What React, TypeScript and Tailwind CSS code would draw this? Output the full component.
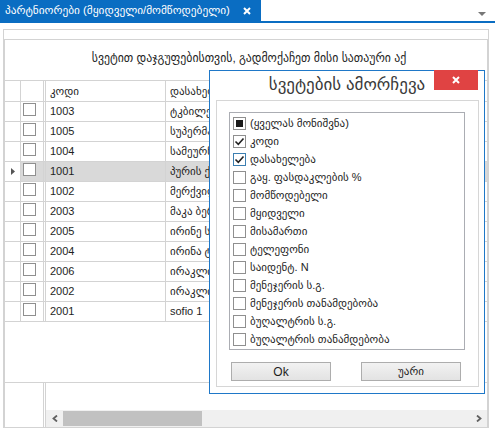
import { useState } from 'react';

const rows = [
  { code: '1003', name: 'ტკბილეული' },
  { code: '1005', name: 'სუპერმარკეტი' },
  { code: '1004', name: 'სამეურნეო' },
  { code: '1001', name: 'პურის ქარხანა' },
  { code: '1002', name: 'მერქვილი' },
  { code: '2003', name: 'მაკა ბერიძე' },
  { code: '2005', name: 'ირინე სალია' },
  { code: '2004', name: 'ირინა ტაბატაძე' },
  { code: '2006', name: 'ირაკლი ბერიძე' },
  { code: '2002', name: 'ირაკლი ლომიძე' },
  { code: '2001', name: 'sofio  1' },
];

const columns = [
  { label: '(ყველას მონიშვნა)', state: 'some' },
  { label: 'კოდი', state: 'on' },
  { label: 'დასახელება', state: 'focus' },
  { label: 'გაყ. ფასდაკლების %', state: 'off' },
  { label: 'მომწოდებელი', state: 'off' },
  { label: 'მყიდველი', state: 'off' },
  { label: 'მისამართი', state: 'off' },
  { label: 'ტელეფონი', state: 'off' },
  { label: 'საიდენტ. N', state: 'off' },
  { label: 'მენეჯერის ს.გ.', state: 'off' },
  { label: 'მენეჯერის თანამდებობა', state: 'off' },
  { label: 'ბუღალტრის ს.გ.', state: 'off' },
  { label: 'ბუღალტრის თანამდებობა', state: 'off' },
];

const Cross = ({ size = 8 }: { size?: number }) => (
  <svg width={size} height={size} viewBox="0 0 8 8">
    <path d="M1 1 L7 7 M7 1 L1 7" stroke="white" strokeWidth="2" />
  </svg>
);

const Check = () => (
  <svg width="11" height="11" viewBox="0 0 11 11" className="absolute left-[0px] top-[0px]">
    <path d="M1.5 5.5 L4.3 8.3 L9.5 2.5" stroke="#222" strokeWidth="1.6" fill="none" />
  </svg>
);

const Box = ({ state }: { state: string }) => (
  <div
    className={
      'relative w-[13px] h-[13px] border bg-white shrink-0 flex items-center justify-center ' +
      (state === 'focus' ? 'border-[#3c7fb1]' : 'border-[#8f8f8f]')
    }
  >
    {state === 'some' && <div className="w-[7px] h-[7px] bg-[#1a1a1a]" />}
    {(state === 'on' || state === 'focus') && <Check />}
  </div>
);

export default function App() {
  const [selected] = useState('1001');

  return (
    <div className="w-[495px] h-[432px] bg-white relative overflow-hidden font-['Liberation_Sans','DejaVu_Sans',sans-serif] text-[#1e1e1e]">
      {/* tab strip */}
      <div className="flex h-[21px]">
        <div className="w-[261px] bg-[#0a6dc2] flex items-center pl-[5px] pr-[10px] text-white text-[11.3px]">
          <span className="flex-1 whitespace-nowrap">პარტნიორები (მყიდველი/მომწოდებელი)</span>
          <Cross size={8} />
        </div>
        <div className="flex-1 flex justify-end items-center pr-[9px] pt-[6px]">
          <svg width="8" height="4" viewBox="0 0 8 4">
            <path d="M0 0 L8 0 L4 4 Z" fill="#777" />
          </svg>
        </div>
      </div>
      <div className="h-[2px] bg-[#0a6dc2]" />

      {/* grid control */}
      <div className="ml-[3px] mt-[6px] w-[486px] h-[399px] border border-[#d3d3d3] pt-[9px] flex flex-col">
        <div className="flex-1 border-t border-x border-[#d3d3d3] flex flex-col">
          <div className="h-[40px] flex items-center justify-center text-[11.8px] pb-[2px] pl-[6px]">
            სვეტით დაჯგუფებისთვის, გადმოქაჩეთ მისი სათაური აქ
          </div>

          {/* header */}
          <div className="flex h-[22px] border-y border-[#d3d3d3] text-[11px]">
            <div className="w-[16px] border-r border-[#d3d3d3]" />
            <div className="w-[23px] border-r border-[#d3d3d3]" />
            <div className="w-[1px]" />
            <div className="w-[121px] border-x border-[#d3d3d3] pl-[4px] flex items-center">კოდი</div>
            <div className="flex-1 pl-[4px] flex items-center whitespace-nowrap">დასახელება</div>
          </div>

          {rows.map((r) => {
            const sel = r.code === selected;
            return (
              <div key={r.code} className="flex h-[20px] border-b border-[#d3d3d3] text-[11px]">
                <div className="w-[16px] border-r border-[#d3d3d3] flex items-center justify-center">
                  {sel && (
                    <svg width="4" height="7" viewBox="0 0 4 7">
                      <path d="M0 0 L4 3.5 L0 7 Z" fill="#555" />
                    </svg>
                  )}
                </div>
                <div className={'w-[23px] border-r border-[#d3d3d3] pl-[2px] pt-[1px] ' + (sel ? 'bg-[#d9d9d9]' : '')}>
                  <Box state="off" />
                </div>
                <div className={'w-[1px] ' + (sel ? 'bg-[#d9d9d9]' : '')} />
                <div className={'w-[121px] border-x border-[#d3d3d3] pl-[4px] flex items-center ' + (sel ? 'bg-[#d9d9d9]' : '')}>
                  {r.code}
                </div>
                <div className={'flex-1 pl-[4px] flex items-center whitespace-nowrap overflow-hidden ' + (sel ? 'bg-[#d9d9d9]' : '')}>
                  {r.name}
                </div>
              </div>
            );
          })}

          <div className="h-[60px]" />

          {/* footer with scrollbar */}
          <div className="flex-1 flex border-t border-[#d3d3d3]">
            <div className="w-[39px] border-r border-[#d3d3d3]" />
            <div className="w-[1px]" />
            <div className="flex-1 border-l border-[#d3d3d3] flex flex-col justify-end">
              <div className="h-[17px] bg-[#f0f0f0] flex items-center">
                <div className="w-[17px] flex items-center justify-center">
                  <svg width="6" height="7" viewBox="0 0 6 7">
                    <path d="M5 0.5 L1.5 3.5 L5 6.5" stroke="#606060" strokeWidth="1.8" fill="none" />
                  </svg>
                </div>
                <div className="w-[139px] h-[15px] bg-[#c1c1c1]" />
                <div className="flex-1" />
                <div className="w-[17px] flex items-center justify-center">
                  <svg width="6" height="7" viewBox="0 0 6 7">
                    <path d="M1 0.5 L4.5 3.5 L1 6.5" stroke="#606060" strokeWidth="1.8" fill="none" />
                  </svg>
                </div>
              </div>
            </div>
          </div>
        </div>
      </div>

      {/* column chooser dialog */}
      <div className="absolute left-[209px] top-[70px] w-[276px] h-[324px] border border-[#1f78c8] bg-white flex flex-col">
        <div className="absolute right-[6px] top-[-1px] w-[44px] h-[20px] bg-[#e04343] flex items-center justify-center">
          <Cross size={8} />
        </div>
        <div className="h-[29px] flex items-center justify-center text-[17px] text-[#3a3a3a] pb-[1px]">
          სვეტების ამორჩევა
        </div>
        <div className="ml-[6px] w-[263px] h-[287px] border border-[#d6d6d6] pl-[12px] pt-[11px]">
          <div className="w-[236px] h-[238px] border border-[#abadb3] pl-[3px] pt-[1px]">
            {columns.map((c) => (
              <div key={c.label} className="h-[18px] flex items-center gap-[4px] text-[11px] whitespace-nowrap">
                <Box state={c.state} />
                <span>{c.label}</span>
              </div>
            ))}
          </div>
          <div className="flex gap-[30px] mt-[12px] ml-[2px]">
            <button className="w-[100px] h-[19px] border border-[#adadad] bg-gradient-to-b from-[#f2f2f2] to-[#e3e3e3] text-[12px] leading-none">
              Ok
            </button>
            <button className="w-[100px] h-[19px] border border-[#adadad] bg-gradient-to-b from-[#f2f2f2] to-[#e3e3e3] text-[11px] leading-none">
              უარი
            </button>
          </div>
        </div>
      </div>
    </div>
  );
}
